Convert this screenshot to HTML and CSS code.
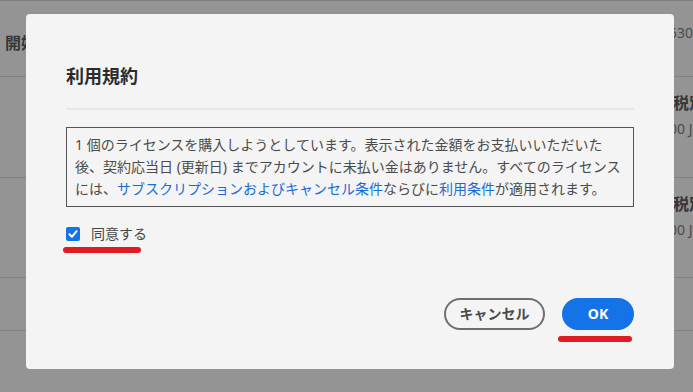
FILE: index.html
```html
<!DOCTYPE html>
<html lang="ja">
<head>
<meta charset="utf-8">
<title>利用規約</title>
<link rel="stylesheet" href="styles.css">
</head>
<body>
<div class="page">
  <div class="row r1">
    <div class="cell-left"><span class="strong">開始日</span></div>
    <div class="cell-right"><span class="num">530</span></div>
  </div>
  <div class="row r2">
    <div class="cell-left"></div>
    <div class="cell-right"><span class="strong tax">税別</span><span class="num">00 JPY</span></div>
  </div>
  <div class="row r3">
    <div class="cell-left"></div>
    <div class="cell-right"><span class="strong tax">税別</span><span class="num">00 JPY</span></div>
  </div>
  <div class="row r4"></div>
  <div class="row r5"></div>
</div>

<div class="dialog" role="dialog" aria-labelledby="dlg-title">
  <h2 class="title" id="dlg-title">利用規約</h2>
  <div class="divider"></div>
  <div class="terms">1 個のライセンスを購入しようとしています。表示された金額をお支払いいただいた<br>後、契約応当日 (更新日) までアカウントに未払い金はありません。すべてのライセンス<br>には、<a class="link" href="#">サブスクリプションおよびキャンセル条件</a>ならびに<a class="link" href="#">利用条件</a>が適用されます。</div>
  <label class="agree">
    <span class="checkbox"><svg viewBox="0 0 14 14" width="14" height="14"><path d="M3.4 7.3 L5.9 9.8 L10.6 4.2" fill="none" stroke="#fff" stroke-width="2" stroke-linecap="round" stroke-linejoin="round"/></svg></span>
    <span class="agree-text">同意する</span>
    <span class="mark mark-agree"></span>
  </label>
  <div class="footer">
    <button class="btn btn-secondary" type="button">キャンセル</button>
    <span class="btn-wrap">
      <button class="btn btn-primary" type="button">OK</button>
      <span class="mark mark-ok"></span>
    </span>
  </div>
</div>
</body>
</html>
```

FILE: styles.css
```css
html, body {
  margin: 0;
  padding: 0;
}
body {
  background: #949494;
  font-family: "Noto Sans", "Noto Sans CJK JP", sans-serif;
  width: 693px;
  height: 392px;
  overflow: hidden;
  position: relative;
}
.page {
  border-top: 1px solid #7b7b7b;
}
.row {
  display: grid;
  grid-template-columns: 669px 1fr;
  border-bottom: 1px solid #818181;
  white-space: nowrap;
  overflow: hidden;
}
.r1 { height: 75px; }
.r2 { height: 100px; }
.r3 { height: 99px; }
.r4 { height: 52px; }
.r5 { height: 60px; border-bottom: none; }

.cell-left {
  padding: 30px 0 0 5px;
  line-height: 24px;
}
.cell-right {
  display: flex;
  flex-direction: column;
  align-items: flex-start;
  line-height: 25px;
  padding-top: 14px;
}
.r1 .cell-right { padding-top: 19px; }
.strong {
  font-weight: 700;
  font-size: 16px;
  color: #363636;
}
.tax { margin-left: 4px; }
.num {
  font-size: 14px;
  color: #4a4a4a;
}

.dialog {
  position: absolute;
  left: 26px;
  top: 14px;
  width: 648px;
  height: 355px;
  box-sizing: border-box;
  background: #f4f4f4;
  border-radius: 4px;
  padding: 0 40px 39px;
  display: flex;
  flex-direction: column;
}
.title {
  margin: 50px 0 0;
  font-size: 18px;
  line-height: 24px;
  font-weight: 700;
  color: #2c2c2c;
}
.divider {
  margin-top: 20px;
  height: 2px;
  background: #e7e7e7;
}
.terms {
  margin-top: 17px;
  border: 1px solid #545454;
  padding: 6px 8px;
  font-size: 14px;
  line-height: 22px;
  color: #4b4b4b;
  white-space: nowrap;
}
.link {
  color: #1a6bd4;
  text-decoration: none;
}
.agree {
  position: relative;
  margin-top: 16px;
  height: 22px;
  display: flex;
  align-items: center;
  gap: 11px;
  align-self: flex-start;
}
.checkbox {
  width: 14px;
  height: 14px;
  border-radius: 2px;
  background: #1473e6;
  display: flex;
}
.agree-text {
  font-size: 14px;
  line-height: 22px;
  color: #464646;
}
.mark {
  position: absolute;
  height: 6px;
  border-radius: 3px;
  background: #e01b22;
}
.mark-agree {
  left: -3px;
  top: 24px;
  width: 78px;
}
.footer {
  margin-top: auto;
  display: flex;
  justify-content: flex-end;
  gap: 17px;
}
.btn-wrap {
  position: relative;
  display: flex;
}
.mark-ok {
  left: -4px;
  top: 38px;
  width: 74px;
}
.btn {
  height: 32px;
  border-radius: 16px;
  font-family: "Noto Sans", "Noto Sans CJK JP", sans-serif;
  font-size: 14px;
  font-weight: 700;
  line-height: 1;
  box-sizing: border-box;
  cursor: pointer;
}
.btn-secondary {
  background: transparent;
  border: 2px solid #6f6f6f;
  color: #4b4b4b;
  padding: 0 13.5px;
}
.btn-primary {
  background: #1473e6;
  border: 2px solid #1473e6;
  color: #ffffff;
  width: 72px;
  padding: 0;
}
```
